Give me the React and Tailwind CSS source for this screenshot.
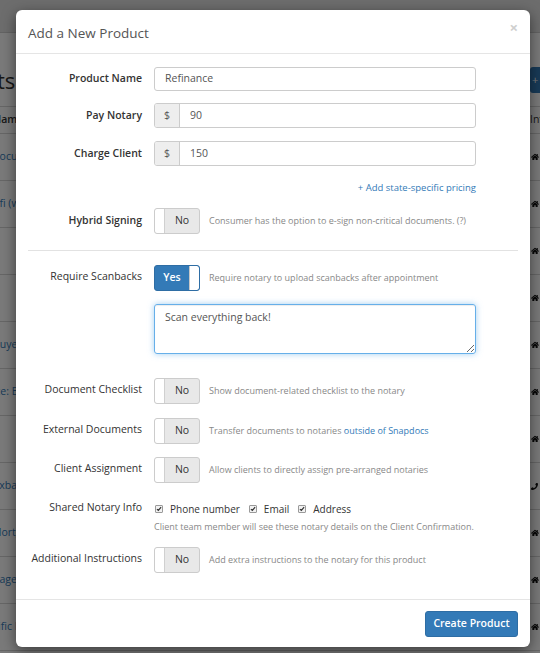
import { FaHome, FaPhoneAlt } from 'react-icons/fa';

const rows = [
    { text: 'Documents', shift: '-ml-[8px]', icon: 'home' },
    { text: 'Refi (with HELOC)', shift: '-ml-[13px]', icon: 'home' },
    { text: '', shift: '', icon: 'home' },
    { text: '', shift: '', icon: 'home' },
    { text: 'Buyer', shift: '-ml-[7px]', icon: 'home' },
    { text: 'Refinance: E-sign', shift: '-ml-[42px]', icon: 'home' },
    { text: '', shift: '', icon: 'home' },
    { text: 'Faxback', shift: '-ml-[12px]', icon: 'phone' },
    { text: 'Mortgage', shift: '-ml-[8px]', icon: 'home' },
    { text: 'Mortgage', shift: '-ml-[30px]', icon: 'home' },
    { text: 'Specific Form', shift: '-ml-[25px]', icon: 'home' },
];

function Toggle({ on }) {
    if (on) {
        return (
            <div className="flex h-[26px] w-[46px] shrink-0 overflow-hidden rounded-[3px] border border-[#2e6da4] bg-[#337ab7]">
                <span className="flex flex-1 items-center justify-center text-[10.5px] font-semibold text-white">Yes</span>
                <span className="w-[10px] rounded-r-[2px] border-l border-[#c8c8c8] bg-white"></span>
            </div>
        );
    }
    return (
        <div className="flex h-[26px] w-[46px] shrink-0 overflow-hidden rounded-[3px] border border-[#ccc] bg-[#e8e8e8]">
            <span className="w-[10px] rounded-l-[2px] border-r border-[#d0d0d0] bg-white"></span>
            <span className="flex flex-1 items-center justify-center text-[10.5px] text-[#333]">No</span>
        </div>
    );
}

function Check({ label }) {
    return (
        <label className="flex items-center">
            <span className="flex h-[8px] w-[8px] items-center justify-center rounded-[1px] border border-[#9a9a9a] bg-[#f2f2f2]">
                <svg viewBox="0 0 8 8" className="h-[6px] w-[6px]">
                    <path d="M1.2 4.2 L3.1 6 L6.8 1.6" fill="none" stroke="#333" strokeWidth="1.6" />
                </svg>
            </span>
            <span className="ml-[7px] text-[10px] text-[#333]">{label}</span>
        </label>
    );
}

function SwitchRow({ label, on, children, className }) {
    return (
        <div className={`flex items-center ${className}`}>
            <div className="w-[114px] pb-[2px] text-right text-[10.5px] text-[#333]">{label}</div>
            <div className="ml-3 flex items-center">
                <Toggle on={on} />
                <span className="ml-[9px] text-[9px] text-[#888]">{children}</span>
            </div>
        </div>
    );
}

function InputRow({ label, value, addon, className, h }) {
    return (
        <div className={`flex items-center ${className}`}>
            <div className="w-[114px] text-right text-[10.5px] font-semibold text-[#333]">{label}</div>
            <div className={`ml-3 flex w-[322px] ${h} overflow-hidden rounded-[3px] border border-[#ccc] bg-white`}>
                {addon && (
                    <span className="flex w-[25px] items-center justify-center border-r border-[#ccc] bg-[#eee] text-[10.5px] text-[#555]">{addon}</span>
                )}
                <span className="flex items-center px-[10px] text-[10.5px] text-[#555]">{value}</span>
            </div>
        </div>
    );
}

export default function App() {
    return (
        <div className="relative h-[653px] w-[540px] overflow-hidden bg-white font-['Open_Sans',sans-serif]">
            {/* page behind the dialog */}
            <div className="h-[33px] border-b border-[#cfcfcf] bg-[#e4e4e4]"></div>
            <div className="flex h-[73px] items-end pb-[13px]">
                <h1 className="-ml-[76px] flex h-[26px] items-center text-[22px] text-[#333]">Products</h1>
                <button className="ml-auto mr-[-80px] flex h-[26px] w-[90px] items-center rounded-[3px] bg-[#337ab7] pl-[2px] text-[11px] text-white">+ Add Product</button>
            </div>
            <div className="flex h-[28px] items-center border-y border-[#d6d6d6]">
                <span className="-ml-[7px] flex-1 text-[10.5px] font-semibold text-[#333]">Name</span>
                <span className="w-[40px] pl-[30px] text-[10.5px] text-[#333]">Info</span>
            </div>
            {rows.map((r, i) => (
                <div key={i} className="flex h-[47px] items-center border-b border-[#d6d6d6]">
                    <span className={`${r.shift} flex-1 text-[10.5px] text-[#337ab7]`}>{r.text}</span>
                    <span className="w-[40px] pl-[31px] text-[#111]">
                        {r.icon === 'home' ? <FaHome className="h-[8px] w-[8px]" /> : <FaPhoneAlt className="h-[7px] w-[7px] -scale-x-100" />}
                    </span>
                </div>
            ))}

            {/* backdrop */}
            <div className="absolute inset-0 bg-black/[0.52]"></div>

            {/* dialog */}
            <div className="absolute left-[16px] top-[10px] w-[514px] rounded-[6px] bg-white shadow-[0_4px_14px_rgba(0,0,0,0.5)]">
                <div className="flex h-[44px] items-center justify-between border-b border-[#e5e5e5] px-3">
                    <h2 className="pt-[3px] text-[13.5px] text-[#555]">Add a New Product</h2>
                    <span className="pb-[8px] text-[15px] font-bold leading-none text-[#cfcfcf]">×</span>
                </div>

                <div className="flex flex-col px-3 pb-[26px] pt-[13px]">
                    <InputRow label="Product Name" value="Refinance" h="h-[24px]" />
                    <InputRow label="Pay Notary" value="90" addon="$" h="h-[25px]" className="mt-[12px]" />
                    <InputRow label="Charge Client" value="150" addon="$" h="h-[25px]" className="mt-[13px]" />

                    <div className="mt-[15px] flex">
                        <a className="ml-[126px] w-[322px] text-right text-[9.5px] leading-[13px] text-[#337ab7]">+ Add state-specific pricing</a>
                    </div>

                    <div className="mt-[14px] flex items-center">
                        <div className="w-[114px] pb-[1px] text-right text-[10.5px] font-semibold text-[#333]">Hybrid Signing</div>
                        <div className="ml-3 flex items-center">
                            <Toggle on={false} />
                            <span className="ml-[9px] text-[9px] text-[#888]">Consumer has the option to e-sign non-critical documents. (?)</span>
                        </div>
                    </div>

                    <div className="mt-[16px] h-px bg-[#e2e2e2]"></div>

                    <SwitchRow label="Require Scanbacks" on className="mt-[14px]">
                        Require notary to upload scanbacks after appointment
                    </SwitchRow>

                    <div className="mt-[13px] flex">
                        <textarea
                            readOnly
                            defaultValue="Scan everything back!"
                            className="ml-[126px] h-[50px] w-[322px] rounded-[3px] border border-[#66afe9] px-[10px] py-[5px] text-[10.5px] leading-[14px] text-[#555] shadow-[inset_0_1px_1px_rgba(0,0,0,0.075),0_0_6px_rgba(102,175,233,0.6)] outline-none"
                        />
                    </div>

                    <SwitchRow label="Document Checklist" className="mt-[24px]">
                        Show document-related checklist to the notary
                    </SwitchRow>
                    <SwitchRow label="External Documents" className="mt-[14px]">
                        Transfer documents to notaries <span className="text-[#337ab7]">outside of Snapdocs</span>
                    </SwitchRow>
                    <SwitchRow label="Client Assignment" className="mt-[13px]">
                        Allow clients to directly assign pre-arranged notaries
                    </SwitchRow>

                    <div className="mt-[19px] flex items-start">
                        <div className="flex h-[14px] w-[114px] items-center justify-end pb-[2px] text-[10.5px] text-[#333]">Shared Notary Info</div>
                        <div className="ml-3 flex flex-col">
                            <div className="flex h-[14px] items-center gap-[9px] pl-px">
                                <Check label="Phone number" />
                                <Check label="Email" />
                                <Check label="Address" />
                            </div>
                            <div className="mt-[4px] text-[9px] leading-[13px] text-[#888]">
                                Client team member will see these notary details on the Client Confirmation.
                            </div>
                        </div>
                    </div>

                    <SwitchRow label="Additional Instructions" className="mt-[14px]">
                        Add extra instructions to the notary for this product
                    </SwitchRow>
                </div>

                <div className="flex justify-end border-t border-[#e5e5e5] px-3 pb-[10px] pt-[11px]">
                    <button className="flex h-[26px] w-[93px] items-center justify-center rounded-[3px] border border-[#2e6da4] bg-[#337ab7] text-[10.5px] font-semibold text-white">
                        Create Product
                    </button>
                </div>
            </div>
        </div>
    );
}
